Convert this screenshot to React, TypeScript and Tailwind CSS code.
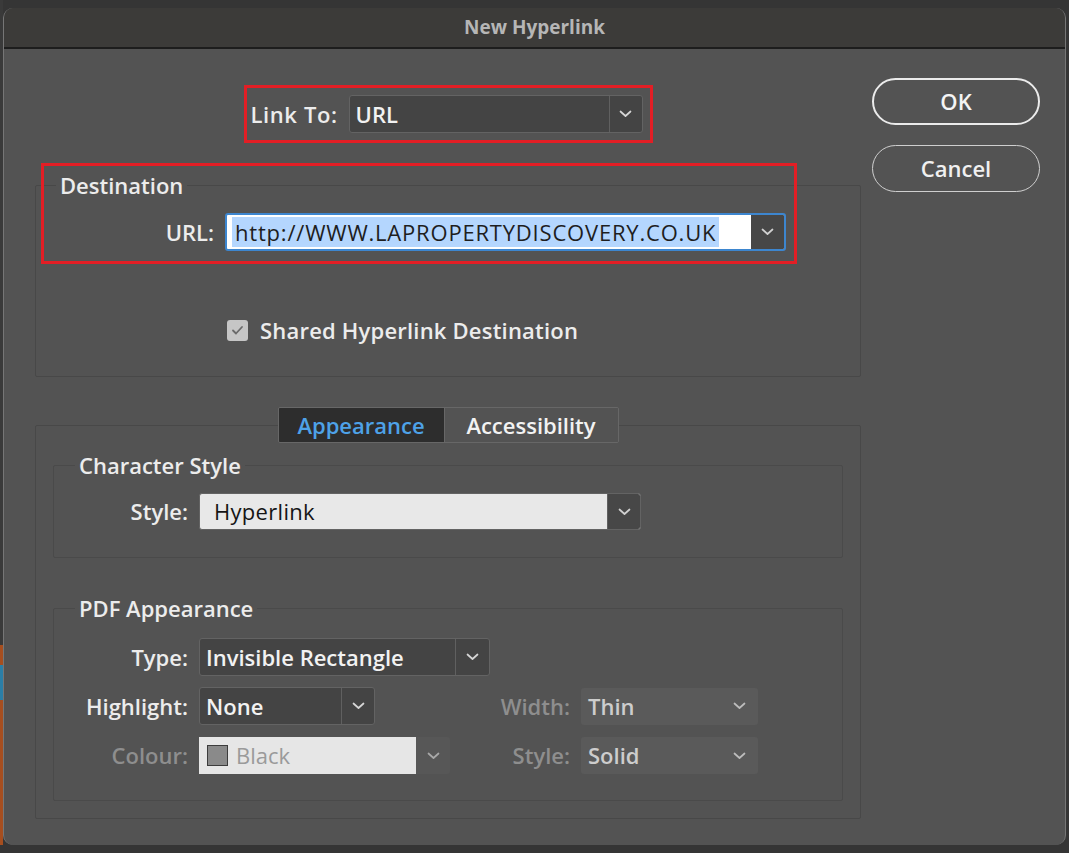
import React from 'react';

function Chevron({ className = '' }: { className?: string }) {
  return (
    <svg width="13" height="8" viewBox="0 0 13 8" className={className}>
      <path d="M1.5 1.5 L6.5 6 L11.5 1.5" fill="none" stroke="currentColor" strokeWidth="1.7" strokeLinecap="round" strokeLinejoin="round" />
    </svg>
  );
}

function DarkSelect({ value, className, arrow = 'w-[33px]' }: { value: string; className: string; arrow?: string }) {
  return (
    <div className={`flex h-[38px] rounded-[3px] border border-[#636363] bg-[#444444] ${className}`}>
      <div className="flex flex-1 items-center pl-[6px] text-[22px] font-semibold text-[#f2f2f2]">{value}</div>
      <div className={`flex items-center justify-center border-l border-[#606060] text-[#d6d6d6] ${arrow}`}>
        <Chevron />
      </div>
    </div>
  );
}

function MutedSelect({ value }: { value: string }) {
  return (
    <div className="flex h-[37px] w-[177px] items-center justify-between rounded-[3px] bg-[#5a5a5a] pl-[7px] pr-[12px]">
      <span className="text-[22px] font-semibold text-[#cdcdcd]">{value}</span>
      <Chevron className="text-[#bcbcbc]" />
    </div>
  );
}

export default function App() {
  return (
    <div className="flex h-[853px] w-[1069px] bg-[#353535] font-['Open_Sans','Liberation_Sans',sans-serif] text-[#ececec]">
      <div className="flex w-[3px] flex-col">
        <div className="h-[645px] bg-[#3a3a3a]" />
        <div className="h-[20px] bg-[#a64e1f]" />
        <div className="h-[35px] bg-[#2b7ea6]" />
        <div className="h-[145px] bg-[#a64e1f]" />
      </div>

      <div className="mb-[8px] mr-[3px] mt-[8px] flex flex-1 flex-col overflow-hidden rounded-[10px] border-l border-r border-[#767676] bg-[#535353]">
        <div className="flex h-[41px] items-center justify-center border-b-2 border-[#1d1d1d] bg-[#3c3b39] text-[19px] font-bold text-[#b6b6b6]">
          New Hyperlink
        </div>

        <div className="flex flex-1">
          <div className="ml-[31px] flex w-[826px] flex-col pt-[36px]">
            <div className="mx-auto flex h-[58px] w-[409px] items-center gap-[11px] border-[3px] border-[#e31e25] pl-[4px]">
              <span className="text-[22px] font-semibold tracking-[0.6px]">Link To:</span>
              <DarkSelect value="URL" className="w-[294px]" />
            </div>

            <div className="relative mt-[28px]">
              <fieldset className="h-[206px] rounded-[2px] border border-[#484848]">
                <legend className="ml-[20px] px-[4px] text-[22px] font-semibold leading-[28px]">Destination</legend>
                <div className="mt-[14px] flex items-center gap-[11px]">
                  <span className="w-[178px] text-right text-[22px] font-semibold">URL:</span>
                  <div className="flex h-[38px] w-[561px] overflow-hidden rounded-[3px] border-2 border-[#3d86cf] bg-white">
                    <div className="flex flex-1 items-center pl-[5px]">
                      <span className="bg-[#b4d6fe] px-[3px] text-[22px] leading-[30px] tracking-[0.8px] text-[#1e1e1e]">
                        http://WWW.LAPROPERTYDISCOVERY.CO.UK
                      </span>
                    </div>
                    <div className="flex w-[33px] items-center justify-center bg-[#474747] text-[#d0d0d0]">
                      <Chevron />
                    </div>
                  </div>
                </div>
                <div className="ml-[191px] mt-[63px] flex items-center gap-[12px]">
                  <div className="flex h-[21px] w-[21px] items-center justify-center rounded-[3px] bg-[#c6c6c6]">
                    <svg width="13" height="11" viewBox="0 0 13 11">
                      <path d="M2 5.5 L5 8.5 L11 2" fill="none" stroke="#6a6a6a" strokeWidth="1.8" strokeLinecap="round" strokeLinejoin="round" />
                    </svg>
                  </div>
                  <span className="text-[22px] font-semibold tracking-[0.2px]">Shared Hyperlink Destination</span>
                </div>
              </fieldset>
              <div className="pointer-events-none absolute left-[6px] top-[-8px] h-[101px] w-[756px] border-[3px] border-[#e31e25]" />
            </div>

            <fieldset className="mt-[30px] h-[412px] rounded-[2px] border border-[#484848]">
              <legend className="mx-auto flex h-[36px] overflow-hidden rounded-[2px] border border-[#676767] text-[22px] font-semibold">
                <div className="flex w-[165px] items-center justify-center bg-[#2d2d2d] text-[#4ea2e8]">Appearance</div>
                <div className="flex w-[174px] items-center justify-center border-l border-[#676767] bg-[#535353] text-[#f2f2f2]">Accessibility</div>
              </legend>

              <fieldset className="mx-[17px] mt-[8px] h-[107px] rounded-[2px] border border-[#4a4a4a]">
                <legend className="ml-[21px] px-[4px] text-[22px] font-semibold leading-[28px]">Character Style</legend>
                <div className="mt-[14px] flex items-center gap-[11px]">
                  <span className="w-[134px] text-right text-[22px] font-semibold">Style:</span>
                  <div className="flex h-[37px] w-[442px] overflow-hidden rounded-[3px] border border-[#636363] bg-[#e8e8e8]">
                    <div className="flex flex-1 items-center pl-[14px] text-[22px] tracking-[0.3px] text-[#151515]">Hyperlink</div>
                    <div className="flex w-[33px] items-center justify-center border-l border-[#606060] bg-[#474747] text-[#d0d0d0]">
                      <Chevron />
                    </div>
                  </div>
                </div>
              </fieldset>

              <fieldset className="mx-[17px] mt-[36px] h-[207px] rounded-[2px] border border-[#4a4a4a]">
                <legend className="ml-[21px] px-[4px] text-[22px] font-semibold leading-[28px]">PDF Appearance</legend>
                <div className="mt-[16px] flex flex-col gap-[11px]">
                  <div className="flex items-center gap-[11px]">
                    <span className="w-[134px] text-right text-[22px] font-semibold">Type:</span>
                    <DarkSelect value="Invisible Rectangle" className="w-[291px]" arrow="w-[34px]" />
                  </div>
                  <div className="flex items-center">
                    <div className="flex w-[436px] items-center gap-[11px]">
                      <span className="w-[134px] text-right text-[22px] font-semibold">Highlight:</span>
                      <DarkSelect value="None" className="w-[176px]" arrow="w-[33px]" />
                    </div>
                    <div className="flex items-center gap-[11px]">
                      <span className="w-[80px] text-right text-[22px] font-semibold text-[#8e8e8e]">Width:</span>
                      <MutedSelect value="Thin" />
                    </div>
                  </div>
                  <div className="mt-[1px] flex items-center">
                    <div className="flex w-[436px] items-center gap-[11px]">
                      <span className="w-[134px] text-right text-[22px] font-semibold text-[#8e8e8e]">Colour:</span>
                      <div className="flex h-[37px] w-[251px] rounded-[3px] bg-[#575757]">
                        <div className="flex w-[217px] items-center gap-[8px] bg-[#e6e6e6] pl-[8px]">
                          <div className="h-[21px] w-[21px] border-[1.5px] border-[#3c3c3c] bg-[#8a8a8a]" />
                          <span className="text-[22px] text-[#9a9a9a]">Black</span>
                        </div>
                        <div className="flex flex-1 items-center justify-center text-[#a8a8a8]">
                          <Chevron />
                        </div>
                      </div>
                    </div>
                    <div className="flex items-center gap-[11px]">
                      <span className="w-[80px] text-right text-[22px] font-semibold text-[#8e8e8e]">Style:</span>
                      <MutedSelect value="Solid" />
                    </div>
                  </div>
                </div>
              </fieldset>
            </fieldset>
          </div>

          <div className="ml-[11px] flex w-[168px] flex-col gap-[20px] pt-[29px]">
            <button className="flex h-[47px] items-center justify-center rounded-full border-2 border-[#ebebeb] text-[22px] font-semibold text-[#f4f4f4]">
              OK
            </button>
            <button className="flex h-[47px] items-center justify-center rounded-full border-[1.5px] border-[#cfcfcf] text-[22px] font-semibold text-[#f0f0f0]">
              Cancel
            </button>
          </div>
        </div>
      </div>
    </div>
  );
}
